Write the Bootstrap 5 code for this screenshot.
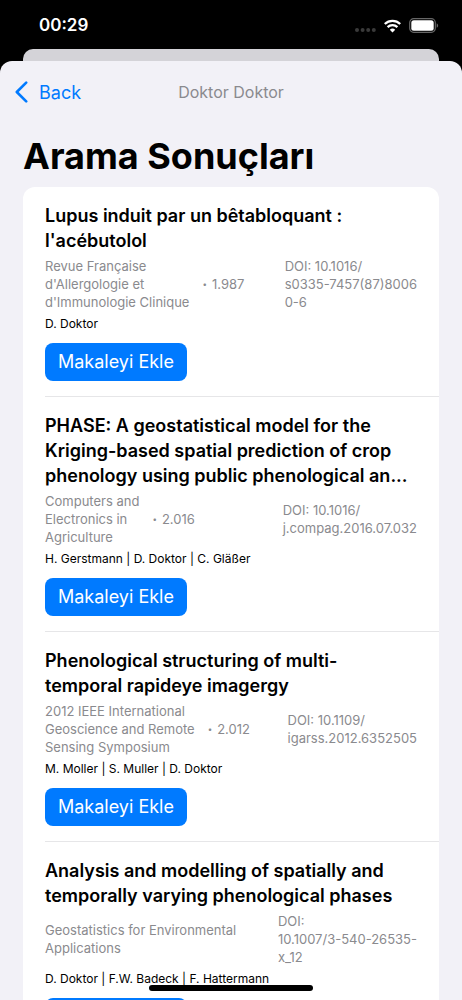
<!DOCTYPE html>
<html lang="tr">
<head>
<meta charset="utf-8">
<meta name="viewport" content="width=device-width, initial-scale=1">
<title>Arama Sonuçları</title>
<link href="https://cdn.jsdelivr.net/npm/bootstrap@5.3.0/dist/css/bootstrap.min.css" rel="stylesheet">
<style>
  body { background: #000; font-family: Inter, "Liberation Sans", sans-serif; color: #000; }
  .status-bar { height: 49px; padding: 2px 23px 0 39px; font-size: 17px; font-weight: 600; }
  .sheet-behind { height: 12px; margin: 0 23px; background: #d4d3d8; border-radius: 10px 10px 0 0; }
  .sheet { background: #f2f1f7; border-radius: 12px 12px 0 0; padding: 0 23px; min-height: 0; }
  .sheet-nav { height: 62px; display: grid; grid-template-columns: 1fr auto 1fr; margin: 0 -8px; }
  .back-link { color: #007aff; font-size: 18px; gap: 11px; }
  .sheet-caption { color: #8a8a8e; font-size: 16px; }
  .page-title { font-size: 36px; line-height: 46px; font-weight: 700; margin: 10px 0 8px; }
  .results { background: #fff; border-radius: 12px 12px 0 0; padding-left: 22px; }
  .result { padding: 16px 22px 15px 0; border-bottom: 1px solid #e6e6e8; }
  .result-title { font-size: 18px; line-height: 25px; font-weight: 600; margin: 0 0 4px; }
  .meta { font-size: 13px; line-height: 18px; color: #8a8a8e; gap: 13px; min-height: 54px; }
  .meta-year { display: flex; align-items: center; gap: 5px; }
  .bullet { font-size: 8px; }
  .authors { font-size: 12px; line-height: 17px; margin: 4px 0 11px; }
  .btn-add { background: #007aff; color: #fff; font-size: 18px; line-height: 26px; padding: 6px 13px; border: 0; border-radius: 8px; display: block; }
  .btn-add:hover { background: #0069d9; color: #fff; }
  .home-indicator { width: 164px; height: 6px; bottom: 9px; background: #000; border-radius: 3px; }
</style>
</head>
<body>
<div class="vh-100 overflow-hidden d-flex flex-column position-relative">
  <header class="status-bar d-flex align-items-center justify-content-between text-white flex-shrink-0">
    <time>00:29</time>
    <div class="d-flex align-items-center gap-2">
      <svg width="21" height="16" viewBox="0 0 21 16" fill="#3a3a3a" aria-hidden="true"><circle cx="2" cy="12" r="2"/><circle cx="7.600" cy="12" r="2"/><circle cx="13.200" cy="12" r="2"/><circle cx="18.800" cy="12" r="2"/></svg>
      <svg width="17" height="14" viewBox="0 0 17 14" fill="none" stroke="#fff" stroke-width="2.300" aria-hidden="true"><path d="M.8 5a11 11 0 0 1 15.400 0M3.600 8.100a7 7 0 0 1 9.800 0"/><path d="M8.500 13.500l-2.700-2.700a3.900 3.900 0 0 1 5.400 0z" fill="#fff" stroke="none"/></svg>
      <svg width="30" height="15" viewBox="0 0 30 15" aria-hidden="true"><rect x=".7" y=".7" width="25.600" height="13.600" rx="4" fill="none" stroke="#666" stroke-width="1.200"/><rect x="2.300" y="2.300" width="22.400" height="10.400" rx="2.500" fill="#fff"/><path d="M27.700 5.200v4.600c1.900-.8 1.900-3.800 0-4.600z" fill="#666"/></svg>
    </div>
  </header>
  <div class="sheet-behind flex-shrink-0"></div>
  <main class="sheet flex-grow-1 overflow-hidden">
    <nav class="sheet-nav align-items-center">
      <a href="#" class="back-link d-flex align-items-center text-decoration-none">
        <svg width="13" height="22" viewBox="0 0 13 22" fill="none" stroke="#007aff" stroke-width="2.600" stroke-linecap="round" stroke-linejoin="round" aria-hidden="true"><path d="M11.200 1.600L1.800 11l9.400 9.400"/></svg>
        Back</a>
      <span class="sheet-caption">Doktor Doktor</span>
    </nav>
    <h1 class="page-title">Arama Sonuçları</h1>
    <section class="results">
      <article class="result">
        <h2 class="result-title">Lupus induit par un bêtabloquant :<br>l'acébutolol</h2>
        <div class="meta d-flex align-items-center">
          <span>Revue Française<br>d'Allergologie et<br>d'Immunologie Clinique</span>
          <span class="meta-year text-nowrap"><span class="bullet">•</span> 1.987</span>
          <span class="ms-auto text-nowrap">DOI: 10.1016/<br>s0335-7457(87)8006<br>0-6</span>
        </div>
        <p class="authors">D. Doktor</p>
        <button type="button" class="btn btn-add">Makaleyi Ekle</button>
      </article>
      <article class="result">
        <h2 class="result-title">PHASE: A geostatistical model for the<br>Kriging-based spatial prediction of crop<br>phenology using public phenological an...</h2>
        <div class="meta d-flex align-items-center">
          <span>Computers and<br>Electronics in<br>Agriculture</span>
          <span class="meta-year text-nowrap"><span class="bullet">•</span> 2.016</span>
          <span class="ms-auto text-nowrap">DOI: 10.1016/<br>j.compag.2016.07.032</span>
        </div>
        <p class="authors">H. Gerstmann | D. Doktor | C. Gläßer</p>
        <button type="button" class="btn btn-add">Makaleyi Ekle</button>
      </article>
      <article class="result">
        <h2 class="result-title">Phenological structuring of multi-<br>temporal rapideye imagergy</h2>
        <div class="meta d-flex align-items-center">
          <span>2012 IEEE International<br>Geoscience and Remote<br>Sensing Symposium</span>
          <span class="meta-year text-nowrap"><span class="bullet">•</span> 2.012</span>
          <span class="ms-auto text-nowrap">DOI: 10.1109/<br>igarss.2012.6352505</span>
        </div>
        <p class="authors">M. Moller | S. Muller | D. Doktor</p>
        <button type="button" class="btn btn-add">Makaleyi Ekle</button>
      </article>
      <article class="result">
        <h2 class="result-title">Analysis and modelling of spatially and<br>temporally varying phenological phases</h2>
        <div class="meta d-flex align-items-center">
          <span>Geostatistics for Environmental<br>Applications</span>
          <span class="ms-auto text-nowrap">DOI:<br>10.1007/3-540-26535-<br>x_12</span>
        </div>
        <p class="authors">D. Doktor | F.W. Badeck | F. Hattermann</p>
        <button type="button" class="btn btn-add">Makaleyi Ekle</button>
      </article>
    </section>
  </main>
  <div class="home-indicator position-absolute start-50 translate-middle-x"></div>
</div>
<script src="https://cdn.jsdelivr.net/npm/bootstrap@5.3.0/dist/js/bootstrap.bundle.min.js"></script>
</body>
</html>
